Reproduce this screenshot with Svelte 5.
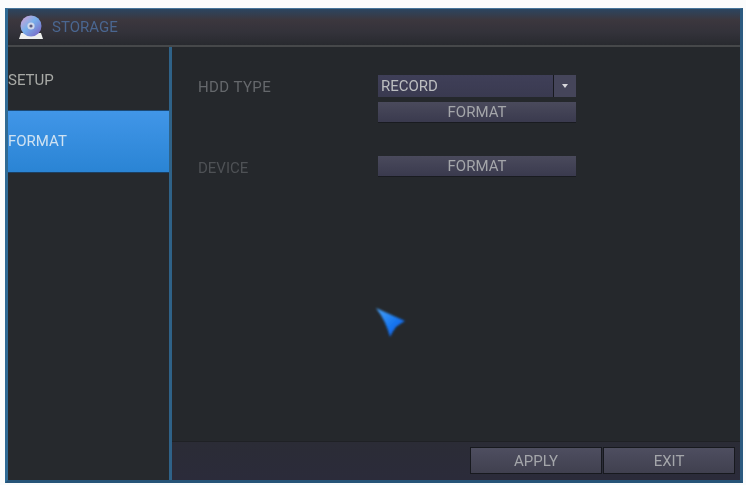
<script>
  const menu = [
    { label: 'SETUP', active: false },
    { label: 'FORMAT', active: true }
  ];
</script>

<div class="page">
  <div class="frame">
    <header class="title">
      <svg class="disc" width="28" height="28" viewBox="0 0 28 28" aria-hidden="true">
        <defs>
          <linearGradient id="d" x1="0" y1="0" x2="1" y2="1">
            <stop offset="0" stop-color="#e0a0d0" />
            <stop offset="0.45" stop-color="#78b0ec" />
            <stop offset="1" stop-color="#7a5cc0" />
          </linearGradient>
        </defs>
        <path d="M4 20 L24 20 L26 26 L2 26 Z" fill="#eef0ee" />
        <circle cx="14" cy="13" r="10.5" fill="url(#d)" />
        <circle cx="14" cy="13" r="3.6" fill="#cfd8ea" />
        <circle cx="14" cy="13" r="1.6" fill="#5c5a80" />
      </svg>
      <span class="title-text">STORAGE</span>
    </header>

    <div class="body">
      <nav class="side">
        {#each menu as item}
          <div class="item" class:active={item.active}>{item.label}</div>
        {/each}
      </nav>

      <main class="main">
        <div class="form">
          <div class="row first">
            <span class="label">HDD TYPE</span>
            <div class="controls">
              <div class="select">
                <span class="value">RECORD</span>
                <span class="arrow"><i></i></span>
              </div>
              <button class="btn">FORMAT</button>
            </div>
          </div>
          <div class="row second">
            <span class="label dim">DEVICE</span>
            <div class="controls">
              <button class="btn">FORMAT</button>
            </div>
          </div>
        </div>

        <footer class="footer">
          <button class="fbtn">APPLY</button>
          <button class="fbtn">EXIT</button>
        </footer>
      </main>
    </div>

    <svg class="cursor" width="36" height="36" viewBox="0 0 36 36" aria-hidden="true">
      <defs>
        <linearGradient id="c" x1="0" y1="0" x2="1" y2="1">
          <stop offset="0" stop-color="#4aa4fa" />
          <stop offset="0.6" stop-color="#1474f0" />
          <stop offset="1" stop-color="#0c50d0" />
        </linearGradient>
        <filter id="b"><feGaussianBlur stdDeviation="0.8" /></filter>
      </defs>
      <path d="M3 4 L32 17 Q27 20 23 23 Q20 27 17 33 Q13 17 3 4 Z" fill="url(#c)" filter="url(#b)" />
    </svg>
  </div>
</div>

<style>
  :global(body) {
    margin: 0;
    background: #fff;
  }
  .page {
    width: 746px;
    height: 485px;
    padding: 8px 3px 2px 5px;
    box-sizing: border-box;
    background: #fbfcfc;
    font-family: "Roboto", "Liberation Sans", sans-serif;
  }
  .frame {
    position: relative;
    height: 100%;
    box-sizing: border-box;
    border: 3px solid #2b5a80;
    border-left-color: #2f6a94;
    border-top: 1px solid #47759a;
    border-bottom-color: #275478;
    display: flex;
    flex-direction: column;
    background: #26292d;
    filter: blur(0.6px);
  }
  .title {
    height: 36px;
    flex: none;
    display: flex;
    align-items: center;
    gap: 6px;
    padding-left: 9px;
    border-bottom: 2px solid #46484a;
    background: linear-gradient(#2c4560 0, #3c373e 30%, #33323a 65%, #282a2f 100%);
  }
  .disc {
    flex: none;
  }
  .title-text {
    font-size: 15px;
    color: #4a6690;
    margin-left: 1px;
  }
  .body {
    flex: 1;
    display: flex;
    min-height: 0;
  }
  .side {
    width: 161px;
    flex: none;
    border-right: 3px solid #2f6288;
    background: #26292d;
  }
  .item {
    height: 62px;
    padding-top: 23px;
    box-sizing: border-box;
    display: flex;
    align-items: flex-start;
    font-size: 15px;
    line-height: 20px;
    color: #a8aaa6;
  }
  .item.active {
    height: 63px;
    margin-top: 1px;
    padding-top: 20px;
    color: #cfe2f2;
    border-top: 1px solid #1b4a78;
    border-bottom: 1px solid #1d3f60;
    background: linear-gradient(#4196e8, #2a84d4);
  }
  .main {
    flex: 1;
    min-width: 0;
    display: flex;
    flex-direction: column;
    background: #25282c;
  }
  .form {
    flex: 1;
    padding: 28px 0 0 26px;
  }
  .row {
    display: flex;
    align-items: flex-start;
  }
  .row.second {
    margin-top: 33px;
  }
  .label {
    width: 180px;
    flex: none;
    font-size: 15px;
    letter-spacing: 0.4px;
    line-height: 24px;
    color: #65686c;
  }
  .label.dim {
    color: #4e5155;
    letter-spacing: 0;
  }
  .controls {
    width: 198px;
    display: flex;
    flex-direction: column;
    gap: 5px;
  }
  .select {
    height: 22px;
    display: flex;
    background: linear-gradient(#3f3f58, #3a3a50);
  }
  .value {
    flex: 1;
    padding-left: 3px;
    font-size: 15px;
    line-height: 22px;
    color: #bcbec0;
    border-right: 1px solid #17191e;
  }
  .arrow {
    width: 22px;
    display: flex;
    align-items: center;
    justify-content: center;
    background: #45455a;
  }
  .arrow i {
    width: 0;
    height: 0;
    border: 3px solid transparent;
    border-top: 4px solid #d8d8dc;
    border-bottom: 0;
  }
  .btn {
    height: 21px;
    padding: 0;
    border: 0;
    border-bottom: 1px solid #191b20;
    font: inherit;
    font-size: 15px;
    color: #a4a6aa;
    background: linear-gradient(#4a4a5c, #3a3a4e);
  }
  .footer {
    height: 39px;
    flex: none;
    box-sizing: border-box;
    display: flex;
    justify-content: flex-end;
    align-items: flex-start;
    gap: 1px;
    padding: 5px 5px 0 0;
    border-top: 1px solid #1f2125;
    background: linear-gradient(#2b2c36, #2b2b3a);
  }
  .fbtn {
    width: 132px;
    height: 27px;
    padding: 0;
    border: 1px solid #17191e;
    font: inherit;
    font-size: 15px;
    color: #a4a6aa;
    background: linear-gradient(#4e4e60, #40404f);
  }
  .cursor {
    position: absolute;
    left: 365px;
    top: 295px;
  }
</style>
